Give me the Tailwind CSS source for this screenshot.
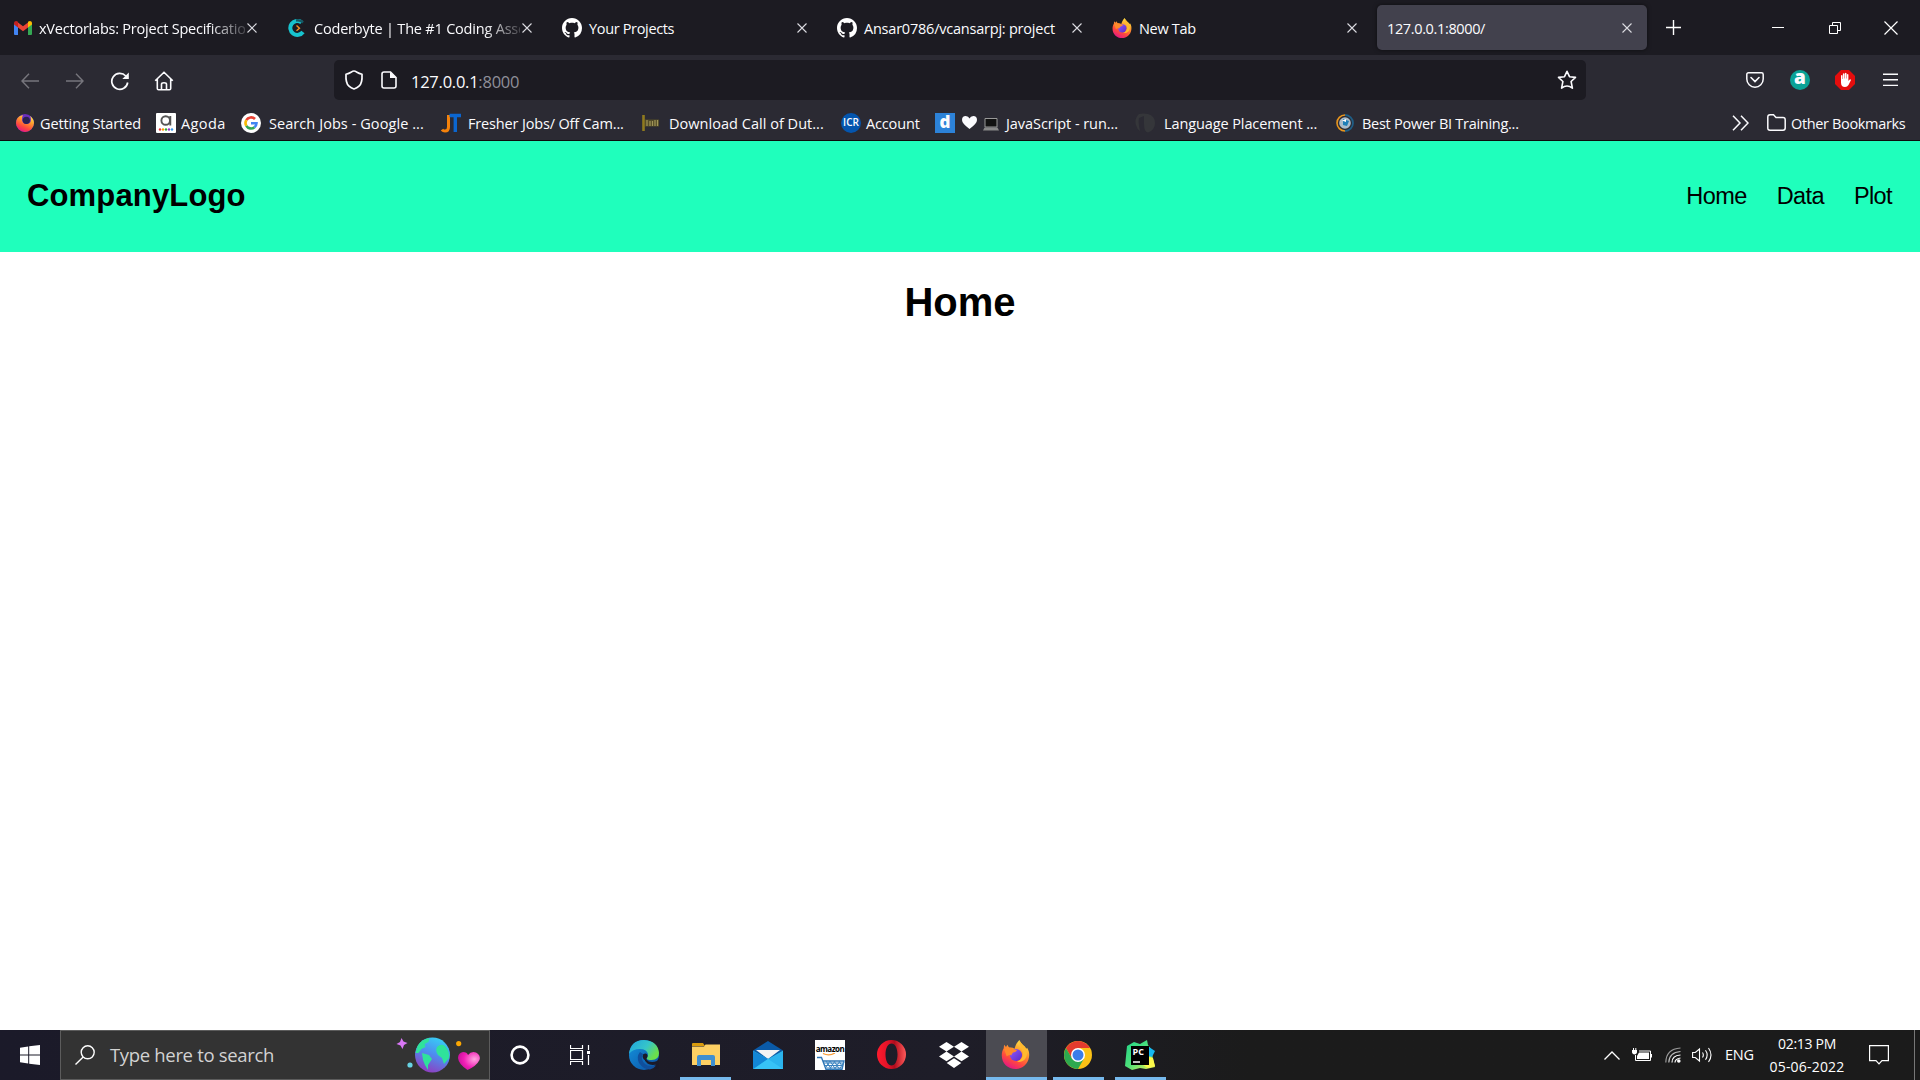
<!DOCTYPE html>
<html lang="en">
<head>
<meta charset="utf-8">
<title>127.0.0.1:8000/</title>
<script src="https://cdn.jsdelivr.net/npm/@tailwindcss/browser@4"></script>
</head>
<body class="w-[1920px] h-[1080px] overflow-hidden bg-white text-[14.5px] font-['Open_Sans','Noto_Sans',sans-serif] text-[#fbfbfe] flex flex-col">
<svg class="absolute w-0 h-0">
  <defs>
    <linearGradient id="fxo" x1="0.8" y1="0" x2="0.3" y2="1"><stop offset="0" stop-color="#fff44f"/><stop offset=".35" stop-color="#ffa02c"/><stop offset=".7" stop-color="#ff4a3d"/><stop offset="1" stop-color="#e31587"/></linearGradient>
    <linearGradient id="fxp" x1="0" y1="0" x2="1" y2="1"><stop offset="0" stop-color="#9059ff"/><stop offset="1" stop-color="#5b2bc4"/></linearGradient>
    <symbol id="x" viewBox="0 0 12 12"><path d="M1.500 1.500l9 9m0-9l-9 9" stroke="#dcdce2" stroke-width="1.100" fill="none"/></symbol>
    <symbol id="gh" viewBox="0 0 16 16"><path fill="#fff" d="M8 0C3.58 0 0 3.58 0 8c0 3.54 2.29 6.53 5.47 7.59.4.07.55-.17.55-.38 0-.19-.01-.82-.01-1.49-2.01.37-2.53-.49-2.69-.94-.09-.23-.48-.94-.82-1.13-.28-.15-.68-.52-.01-.53.63-.01 1.08.58 1.23.82.72 1.21 1.87.87 2.33.66.07-.52.28-.87.51-1.07-1.78-.2-3.64-.89-3.64-3.95 0-.87.31-1.59.82-2.15-.08-.2-.36-1.02.08-2.12 0 0 .67-.21 2.2.82.64-.18 1.32-.27 2-.27s1.36.09 2 .27c1.53-1.04 2.2-.82 2.2-.82.44 1.1.16 1.92.08 2.12.51.56.82 1.27.82 2.15 0 3.07-1.87 3.75-3.65 3.95.29.25.54.73.54 1.48 0 1.07-.01 1.93-.01 2.2 0 .21.15.46.55.38A8.01 8.01 0 0 0 16 8c0-4.42-3.58-8-8-8z"/></symbol>
    <symbol id="fx" viewBox="0 0 30 30"><path fill="url(#fxo)" d="M19 0c1 2 2 3.500 4 5.500 1.500 1 2.500 2 3 3.500l1-1c2 3 2.500 6 2 9.500C28 25 22 30 15 30 7 30 .8 24 .8 16c0-3 .7-5.500 2-7.500L3.200 5l2 2.200L6.500 5l2 3c2-.5 4 0 5.500 1 1-3.500 2.500-6.500 5-9z"/><circle cx="15.500" cy="15.500" r="6.300" fill="url(#fxp)"/><path fill="#ff8a2a" d="M3 9c3-2 7-1.500 10 .5l3.500.8c-.5 1.800-2 2.300-4 2.700-.8 1-1.500 1.500-1.700 3-2-1-3-.5-4.800 1z"/><path fill="#ffb92e" d="M19 1c0 5 3 7.500 3.500 12 .5 5-2 8-6 9.500 6 1 10.500-3 10.500-9 0-4-2-6-4-8z"/></symbol>
  </defs>
</svg>

<!-- tab strip -->
<header class="h-[55px] shrink-0 bg-[#1c1b22] flex items-center">
  <div class="w-[275px] pl-[14px] pr-[15px] flex items-center">
    <svg class="w-[18px] h-[14px] mr-[7px] shrink-0" viewBox="0 0 18 14"><path fill="#4285f4" d="M0 2v11q0 1 1 1h3V5z"/><path fill="#34a853" d="M18 2v11q0 1-1 1h-3V5z"/><path fill="#ea4335" d="M4 1.500L9 5.300l5-3.800v5L9 10.300 4 6.500z"/><path fill="#c5221f" d="M0 2.200C0 .3 2.200-.6 3.600.6l.4.4v5.500L0 3.500z"/><path fill="#fbbc04" d="M18 2.200c0-1.900-2.200-2.800-3.600-1.600l-.4.4v5.500l4-3z"/></svg>
    <div class="w-[206px] mt-[2px] overflow-hidden whitespace-nowrap tracking-[-0.22px] [mask-image:linear-gradient(to_right,black_170px,transparent_214px)]">xVectorlabs: Project Specification</div>
    <svg class="size-[12px] ml-[1px] shrink-0"><use href="#x"/></svg>
  </div>
  <div class="w-[275px] pl-[13px] pr-[15px] flex items-center">
    <svg class="size-[18px] mr-[8px] shrink-0" viewBox="0 0 18 18"><path d="M13.500 3.300A7 7 0 1 0 15 13" fill="none" stroke="#17c3ce" stroke-width="4"/><path d="M8 1.500q4-1 7 2" stroke="#155a66" stroke-width="2.500" fill="none"/><path d="M8.500 6.500l3 2.700-3 2.600" fill="none" stroke="#f59123" stroke-width="1.400"/></svg>
    <div class="w-[206px] mt-[2px] overflow-hidden whitespace-nowrap tracking-[-0.2px] [mask-image:linear-gradient(to_right,black_170px,transparent_214px)]">Coderbyte | The #1 Coding Assessment</div>
    <svg class="size-[12px] ml-[1px] shrink-0"><use href="#x"/></svg>
  </div>
  <div class="w-[275px] pl-[12px] pr-[17px] flex items-center">
    <svg class="size-[20px] mr-[7px] shrink-0"><use href="#gh"/></svg>
    <span class="mt-[2px] tracking-[-0.34px] whitespace-nowrap">Your Projects</span>
    <svg class="size-[12px] ml-auto shrink-0"><use href="#x"/></svg>
  </div>
  <div class="w-[275px] pl-[12px] pr-[17px] flex items-center">
    <svg class="size-[20px] mr-[7px] shrink-0"><use href="#gh"/></svg>
    <span class="mt-[2px] tracking-[-0.22px] whitespace-nowrap">Ansar0786/vcansarpj: project</span>
    <svg class="size-[12px] ml-auto shrink-0"><use href="#x"/></svg>
  </div>
  <div class="w-[277px] pl-[12px] pr-[19px] flex items-center">
    <svg class="size-[20px] mr-[7px] shrink-0"><use href="#fx"/></svg>
    <span class="mt-[2px] tracking-[-0.3px] whitespace-nowrap">New Tab</span>
    <svg class="size-[12px] ml-auto shrink-0"><use href="#x"/></svg>
  </div>
  <div class="w-[270px] h-[45px] rounded-[5px] bg-[#42414d] shadow-[0_0_4px_#0008] pl-[10px] pr-[14px] flex items-center">
    <span class="mt-[2px] tracking-[-0.36px] whitespace-nowrap">127.0.0.1:8000/</span>
    <svg class="size-[12px] ml-auto shrink-0"><use href="#x"/></svg>
  </div>
  <svg class="size-[15px] ml-[19px]" viewBox="0 0 15 15"><path d="M7.500 0v15M0 7.500h15" stroke="#fff" stroke-width="1.400"/></svg>
  <svg class="w-[12px] h-[12px] ml-[91px]" viewBox="0 0 12 12"><path d="M0 5.500h12" stroke="#fff"/></svg>
  <svg class="size-[12px] ml-[45px]" viewBox="0 0 12 12"><path d="M.5 3.500h8v8h-8zM3.500 3V.5h8v8H9" fill="none" stroke="#fff"/></svg>
  <svg class="size-[14px] ml-[43px]" viewBox="0 0 14 14"><path d="M.5.5l13 13m0-13l-13 13" stroke="#fff" stroke-width="1.200"/></svg>
</header>

<!-- navigation bar -->
<div class="h-[50px] shrink-0 bg-[#2b2a33] flex items-center">
  <svg class="w-[18px] h-[16px] ml-[21px] mt-[2px] text-[#77767d]" viewBox="0 0 18 16"><path d="M8 .8L1 8l7 7.200M1 8h17" fill="none" stroke="currentColor" stroke-width="1.400"/></svg>
  <svg class="w-[18px] h-[16px] ml-[27px] mt-[2px] text-[#77767d]" viewBox="0 0 18 16"><path d="M10 .8L17 8l-7 7.200M17 8H0" fill="none" stroke="currentColor" stroke-width="1.400"/></svg>
  <svg class="size-[20px] ml-[26px] mt-[2px]" viewBox="0 0 20 20"><path d="M17.700 11.500A8 8 0 1 1 15.800 5" fill="none" stroke="#fbfbfe" stroke-width="1.700"/><path d="M18.800 1.500v6.500h-6.500z" fill="#fbfbfe"/></svg>
  <svg class="size-[20px] ml-[24px] mt-[2px]" viewBox="0 0 20 20"><path d="M1.200 9.800L10 1.200l8.800 8.600M3.300 8v9.500q0 1.300 1.300 1.300h10.800q1.300 0 1.300-1.300V8M7.500 18.500v-5.200q0-1.500 2.500-1.500t2.500 1.500v5.200" fill="none" stroke="#fbfbfe" stroke-width="1.600" stroke-linejoin="round"/></svg>
  <div class="w-[1252px] h-[40px] ml-[160px] rounded-[5px] bg-[#1c1b22] flex items-center text-[16.500px]">
    <svg class="w-[20px] h-[20px] ml-[10px]" viewBox="0 0 20 20"><path d="M10 1Q11 1 13 2.200t5 2q.5 9-3 12-2 2-5 2.800-3-.8-5-2.800-3.500-3-3-12 3-.8 5-2T10 1z" fill="none" stroke="#fbfbfe" stroke-width="1.700" stroke-linejoin="round"/></svg>
    <svg class="w-[16px] h-[18px] ml-[17px]" viewBox="0 0 16 18"><path d="M9.500 1H3Q1 1 1 3v12q0 2 2 2h10q2 0 2-2V6.500z" fill="none" stroke="#fbfbfe" stroke-width="1.600"/><path d="M9 .8V7h6.500z" fill="#fbfbfe"/></svg>
    <span class="ml-[14px] mt-[4px] tracking-[-0.25px] whitespace-nowrap">127.0.0.1<span class="text-[#8f8f99]">:8000</span></span>
    <svg class="size-[20px] ml-auto mr-[9px]" viewBox="0 0 20 20"><path d="M10 1.300l2.500 5.400 6 .7-4.400 4.100 1.300 6.600Q10 14 4.600 18.100l1.300-6.600L1.500 7.400l6-.7z" fill="none" stroke="#fbfbfe" stroke-width="1.600" stroke-linejoin="round"/></svg>
  </div>
  <svg class="w-[18px] h-[16px] ml-[160px]" viewBox="0 0 18 16"><path d="M2.500.8h13q1.700 0 1.700 1.700V7a8.200 8.200 0 0 1-16.400 0V2.500Q.8.800 2.500.8z" fill="none" stroke="#fbfbfe" stroke-width="1.500"/><path d="M5 5.500l4 4 4-4" fill="none" stroke="#fbfbfe" stroke-width="1.600" stroke-linecap="round"/></svg>
  <span class="size-[20px] ml-[26px] rounded-full bg-[#0aa296] flex items-center justify-center text-[19px] leading-none font-extrabold pb-[5px]">a</span>
  <svg class="size-[20px] ml-[25px]" viewBox="0 0 20 20"><path fill="#e40d0d" d="M6 0h8l6 6v8l-6 6H6l-6-6V6z"/><path fill="#fff" d="M6 5.500q.9-.9 1.500 0V9h.4V3.800q.8-1 1.600 0V8.500h.4V3.300q.8-1 1.600 0v5.300h.4V4.500q.8-.8 1.500 0v6.500l1-1.300q1-.8 1.600.2L13.500 15q-1.200 2-3.500 2-4 0-4-4.500z"/></svg>
  <svg class="w-[15px] h-[14px] ml-[28px]" viewBox="0 0 15 14"><path d="M0 1.200h15M0 6.800h15M0 12.400h15" stroke="#fbfbfe" stroke-width="1.400"/></svg>
</div>

<!-- bookmarks toolbar -->
<div class="h-[36px] shrink-0 bg-[#2b2a33] border-b border-[#0c0c0d] flex items-center pl-[16px] whitespace-nowrap">
  <div class="w-[140px] flex items-center gap-[6px]">
    <svg class="size-[18px]" viewBox="0 0 18 18"><circle cx="9" cy="9" r="9" fill="#6b2fc0"/><path fill="url(#fxo)" d="M1.500 4Q4 1 7 1.200 5.500 3 6 6q.5 4 5 4 4-.3 4-4.500 0-2-1-3.500 4 3 4 7a9 9 0 0 1-18 0q0-3 1.500-5z"/><circle cx="10.300" cy="6.300" r="3.600" fill="#2a2250"/></svg>
    <span class="mt-[2px] tracking-[-0.1px]">Getting Started</span>
  </div>
  <div class="w-[85px] flex items-center gap-[5px]">
    <svg class="size-[20px]" viewBox="0 0 20 20"><rect width="20" height="20" rx="1" fill="#fff"/><circle cx="9.700" cy="7.500" r="4.300" fill="none" stroke="#555" stroke-width="1.900"/><path d="M14.300 3v9.500" stroke="#555" stroke-width="1.900"/><g><circle cx="4" cy="16.500" r="1.200" fill="#e33"/><circle cx="7" cy="16.500" r="1.200" fill="#f90"/><circle cx="10" cy="16.500" r="1.200" fill="#3a3"/><circle cx="13" cy="16.500" r="1.200" fill="#93c"/><circle cx="16" cy="16.500" r="1.200" fill="#39e"/></g></svg>
    <span class="mt-[2px] tracking-[0.4px]">Agoda</span>
  </div>
  <div class="w-[200px] flex items-center gap-[8px]">
    <svg class="size-[20px]" viewBox="0 0 20 20"><circle cx="10" cy="10" r="10" fill="#fff"/><g fill="none" stroke-width="2.600"><path d="M14 6A5.500 5.500 0 0 0 5.300 7.200" stroke="#ea4335"/><path d="M5.300 7.200a5.500 5.500 0 0 0 0 5.600" stroke="#fbbc04"/><path d="M5.300 12.800a5.500 5.500 0 0 0 8.200 1.400" stroke="#34a853"/><path d="M13.500 14.200a5.500 5.500 0 0 0 2-4H10" stroke="#4285f4"/></g></svg>
    <span class="mt-[2px] tracking-[0.07px]">Search Jobs - Google ...</span>
  </div>
  <div class="w-[201px] flex items-center gap-[7px]">
    <svg class="w-[20px] h-[20px]" viewBox="0 0 20 20"><path d="M7.500 2v12q0 4-3.500 4-2 0-3-1.500" fill="none" stroke="#f5820b" stroke-width="3"/><path d="M8.500 2.500H20M14.300 2v17" stroke="#0b66d0" stroke-width="3.400"/></svg>
    <span class="mt-[2px] tracking-[-0.16px]">Fresher Jobs/ Off Cam...</span>
  </div>
  <div class="w-[199px] flex items-center gap-[9px]">
    <svg class="w-[18px] h-[18px]" viewBox="0 0 18 18"><path d="M1.500 1v16" stroke="#8f7a1e" stroke-width="2.600"/><path d="M3 5.500h14v7H3z" fill="#544c28"/><path d="M5 6v6M8 7v5M10.500 7v5M13 6v6M15.500 6v6" stroke="#a19558" stroke-width="1.200"/></svg>
    <span class="mt-[2px] tracking-[0.03px]">Download Call of Dut...</span>
  </div>
  <div class="w-[94px] flex items-center gap-[5px]">
    <span class="size-[20px] rounded-full bg-[#0455ae] flex items-center justify-center text-[10px] font-semibold">ICR</span>
    <span class="mt-[2px] tracking-[-0.15px]">Account</span>
  </div>
  <div class="w-[200px] flex items-center">
    <span class="size-[20px] bg-[#2c82d8] flex items-center justify-center text-[17px] leading-none font-extrabold pb-[2px]">d</span>
    <svg class="w-[15px] h-[13px] ml-[7px]" viewBox="0 0 15 13"><path fill="#fbfbfe" d="M7.500 13Q0 7.500 0 4 0 0 3.700 0 6.500 0 7.500 2.500 8.500 0 11.300 0 15 0 15 4q0 3.500-7.500 9z"/></svg>
    <svg class="w-[16px] h-[13px] mt-[3px] ml-[6px] mr-[7px]" viewBox="0 0 16 13"><path d="M2 .5h12v8.500H2z" fill="#111" stroke="#999"/><path d="M1.500 9.500h13l1.500 3H0z" fill="#888"/></svg>
    <span class="mt-[2px] tracking-[-0.06px]">JavaScript - run...</span>
  </div>
  <div class="w-[201px] flex items-center gap-[9px]">
    <svg class="size-[20px]" viewBox="0 0 20 20"><path d="M4 1Q-1 6 1 12q1 4 4 6-2-7-1-13l5-2v8q0 8 4 8.500Q20 17 20 10T13 1Q8 0 4 1z" fill="#35363a"/></svg>
    <span class="mt-[2px] tracking-[-0.1px]">Language Placement ...</span>
  </div>
  <div class="w-[300px] flex items-center gap-[8px]">
    <svg class="size-[18px]" viewBox="0 0 18 18"><path d="M9 1a8 8 0 0 0 0 16" fill="none" stroke="#e8961f" stroke-width="1.600"/><path d="M9 1a8 8 0 0 1 0 16" fill="none" stroke="#1f5e86" stroke-width="1.800"/><circle cx="9" cy="9" r="5.800" fill="#a9bccb"/><path d="M7 5l6 2-2 5-4-1z" fill="#1e7fb8"/><path d="M6 6.500l4-1.500v3z" fill="#fff"/></svg>
    <span class="mt-[2px] tracking-[-0.27px]">Best Power BI Training...</span>
  </div>
  <svg class="w-[17px] h-[16px] ml-[96px]" viewBox="0 0 17 16"><path d="M1 .8L8 8l-7 7.200M9 .8L16 8l-7 7.200" fill="none" stroke="#fbfbfe" stroke-width="1.500"/></svg>
  <svg class="w-[19px] h-[17px] ml-[18px] mr-[5px]" viewBox="0 0 19 17"><path d="M.8 3Q.8.800 3 .8h3.500l2.500 2.700h7q2.200 0 2.200 2.200v8.300q0 2.200-2.200 2.200H3q-2.200 0-2.200-2.200z" fill="none" stroke="#fbfbfe" stroke-width="1.500"/></svg>
  <span class="mt-[2px] tracking-[-0.35px]">Other Bookmarks</span>
</div>

<!-- web page -->
<main class="flex-1 bg-white text-black font-['Liberation_Sans',Arial,sans-serif]">
  <nav class="h-[111px] bg-[#1fffbc] pl-[27px] pr-[28px] flex items-center justify-between">
    <span class="text-[31px] font-bold tracking-[0.150px]">CompanyLogo</span>
    <div class="flex gap-[30px] text-[23.500px] tracking-[-0.600px]">
      <a>Home</a><a>Data</a><a>Plot</a>
    </div>
  </nav>
  <h1 class="mt-[27px] text-center text-[40px] leading-[46px] font-bold">Home</h1>
</main>

<!-- taskbar -->
<footer class="h-[50px] shrink-0 bg-linear-to-r from-[#1b1a29] via-[#1e1d28] via-50% to-[#1b1b1b] to-65% flex items-center">
  <div class="w-[60px] flex justify-center"><svg class="size-[20px]" viewBox="0 0 20 20"><path fill="#fff" d="M0 2.700l8.200-1.200v8H0zM9.200 1.300L20 0v9.500H9.200zM0 10.500h8.200v8L0 17.300zM9.200 10.500H20V20L9.200 18.700z"/></svg></div>
  <div class="w-[430px] h-[50px] bg-[#333] border border-[#5c5c5c] flex items-center pl-[14px]">
    <svg class="size-[20px]" viewBox="0 0 20 20"><circle cx="12.700" cy="7.300" r="6.500" fill="none" stroke="#fff" stroke-width="1.400"/><path d="M8.200 12L.5 19.500" stroke="#fff" stroke-width="1.400"/></svg>
    <span class="ml-[15px] w-[286px] text-[18.500px] text-[#d2d2d2] tracking-[-0.33px] whitespace-nowrap">Type here to search</span>
    <svg class="w-[85px] h-[36px]" viewBox="396 1037 85 36">
      <defs><linearGradient id="gl" x1=".8" y1="0" x2=".4" y2="1"><stop offset="0" stop-color="#35d5f5"/><stop offset=".5" stop-color="#4d8df0"/><stop offset="1" stop-color="#8e3fc0"/></linearGradient><radialGradient id="ht" cx=".75" cy=".4" r=".8"><stop offset="0" stop-color="#ffa6e0"/><stop offset=".6" stop-color="#f21fb6"/><stop offset="1" stop-color="#c3109a"/></radialGradient></defs>
      <path fill="#d977f5" d="M401.500 1038l2 3.500 4 1.500-3.500 2-1.500 4-2-3.500-4-1.500 3.500-2z"/>
      <circle cx="410" cy="1065" r="2.600" fill="#67d3e3"/><circle cx="458.700" cy="1043.600" r="2.600" fill="#fba703"/>
      <circle cx="432.500" cy="1055" r="17.500" fill="url(#gl)"/>
      <path fill="#2fe39b" d="M417.500 1046q4-7 12-8l-1 4-4 2 1 3-4 2-3 4-3 0zM422 1053l7 2 3 4-4 6 0 5-3-5-2-5zM437 1047q4-4 8-1 5 6 4 12l-5 6-2-6-4-3q-3-4-1-8z"/>
      <path fill="url(#ht)" d="M467.500 1070q-9-6-9.500-12 0-5 5-6 4 0 5 3 3-4 8-2.500 5 2.500 3.500 7.500-3 6-12 10z"/>
    </svg>
  </div>
  <div class="w-[60px] flex justify-center"><svg class="size-[20px]" viewBox="0 0 20 20"><circle cx="10" cy="10" r="8.400" fill="none" stroke="#fff" stroke-width="2.600"/></svg></div>
  <div class="w-[63px] pl-[20px]"><svg class="size-[20px]" viewBox="0 0 20 20"><path d="M.5 0v3.500h12V0M.5 20v-3.500h12V20M.5 5.500h12v9H.5zM18.500 0v5M18.500 10v10" fill="none" stroke="#fff" stroke-width="1.200"/><path d="M17 6h3v3h-3z" fill="#fff"/></svg></div>
  <div class="w-[62px] flex justify-center"><svg class="size-[30px]" viewBox="0 0 30 30">
    <defs><linearGradient id="e1" x1="0" y1="0" x2="1" y2=".5"><stop offset="0" stop-color="#1ea4e0"/><stop offset=".6" stop-color="#36c5c9"/><stop offset="1" stop-color="#6be04a"/></linearGradient><linearGradient id="e2" x1="0" y1="0" x2="1" y2="1"><stop offset="0" stop-color="#1494df"/><stop offset="1" stop-color="#0b4fa0"/></linearGradient></defs>
    <circle cx="15" cy="15" r="15" fill="url(#e2)"/><path fill="#1b1a29" d="M17 20q5 3.500 11 1l2-3v10l-6 2q4-3 4.500-6-6 2-10-.5-3-2-3-5z"/><path fill="url(#e1)" d="M0 14Q1.500 0 15 0q14 1 15 13 0 7-7.500 7-5 0-5-2 2-2 1.500-4-1.500-5-8-5Q3.500 9 0 14z"/><path fill="#104f9c" d="M11 12q-4 5-1 11 4 6 11 6.500 4-1 6-4-7 2-11-1.500-5-5-2-10z"/><path fill="#1b1a29" d="M14 14.500q3-2 4.500.5.5 2-1 3.500 0 2 3 2.500-4 .5-6-2-1.500-2-.5-4.500z"/>
  </svg></div>
  <div class="w-[62px] h-full relative flex items-center justify-center"><svg class="w-[28px] h-[24px] -mt-[2px]" viewBox="0 0 28 24"><path fill="#d99b0c" d="M0 2Q0 1 1 1h10l2 3H0z"/><path fill="#fdd063" d="M0 4.500h12l1.500-2H28V23H0z"/><path fill="#3f8fd0" d="M5 15q0-2 2-2h14q2 0 2 2v9h-4v-6H9v6H5z"/></svg><i class="absolute bottom-0 left-[5px] w-[51px] h-[3px] bg-[#76b9ed]"></i></div>
  <div class="w-[62px] flex justify-center"><svg class="w-[30px] h-[28px]" viewBox="0 0 30 28"><path fill="#0a5aa8" d="M0 9.500L15 0l15 9.500-15 9z"/><path fill="#f3f3f3" d="M3 9h24L15 18z"/><path fill="#2bb4ee" d="M0 9.500L15 18l15-8.500V28H0z"/><path fill="#1387d6" d="M0 10v18l15-10z"/><path fill="#37c3f6" d="M15 18L30 28H1z"/></svg></div>
  <div class="w-[62px] flex justify-center"><div class="size-[30px] bg-white flex flex-col items-center overflow-hidden"><span class="text-[8px] leading-[9px] mt-[4px] font-bold text-black tracking-[-0.500px]">amazon</span><svg class="w-[30px] h-[17px]" viewBox="0 0 30 17"><path d="M8 .5q6 3 12-.5" fill="none" stroke="#f79b34" stroke-width="1.300"/><path d="M2 4.500h4.500L11 16.500M8 8h21l-2 8.500H11z" fill="none" stroke="#2f76b5" stroke-width="1.300"/><path d="M9 10h20M10 12.500h18M11 15h17M11 8l6 9M15 8l6 9M19 8l6 9M24 8l3 5M15 8l-4 6M20 8l-6 9M25 8l-6 9M29 9l-5 8" stroke="#3b83c0" stroke-width="1"/></svg></div></div>
  <div class="w-[62px] flex justify-center"><svg class="size-[29px] -mt-px -ml-px" viewBox="0 0 29 29"><defs><linearGradient id="op"><stop offset="0" stop-color="#ff1b2d"/><stop offset=".4" stop-color="#e01228"/><stop offset=".6" stop-color="#b00c1c"/><stop offset="1" stop-color="#ff5a5a"/></linearGradient></defs><path fill="url(#op)" fill-rule="evenodd" d="M14.500 0a14.500 14.500 0 1 1 0 29 14.500 14.500 0 0 1 0-29zm0 3.500C11 3.500 8.500 8 8.500 14.500S11 25.500 14.500 25.500s6-4.500 6-11-2.500-11-6-11z"/></svg></div>
  <div class="w-[63px] pr-[2px] flex justify-center"><svg class="w-[30px] h-[26px]" viewBox="0 0 30 26"><path fill="#fff" d="M7.500 0L15 4.800 7.500 9.600 0 4.800zM22.500 0L30 4.800l-7.500 4.800L15 4.800zM7.500 9.600l7.500 4.800-7.500 4.800L0 14.400zM22.500 9.600l7.500 4.800-7.500 4.800-7.500-4.800zM15 16.200l7.300 4.800L15 26l-7.300-5z"/></svg></div>
  <div class="w-[61px] h-full bg-[#4b4b52] border-b-[3px] border-[#76b9ed] pt-[2px] flex items-center justify-center"><svg class="size-[29px] -ml-[2px]"><use href="#fx"/></svg></div>
  <div class="w-[62px] h-full relative flex items-center justify-center"><svg class="size-[28px]" viewBox="0 0 28 28"><circle cx="14" cy="14" r="14" fill="#fbc116"/><path fill="#e33b2e" d="M1.900 7A14 14 0 0 1 26.100 7H14L8 17.500z"/><path fill="#2da94f" d="M1.900 7A14 14 0 0 0 14 28l6-10.500H8z"/><circle cx="14" cy="14" r="7" fill="#fff"/><circle cx="14" cy="14" r="5.500" fill="#3b7de9"/></svg><i class="absolute bottom-0 left-[6px] w-[51px] h-[3px] bg-[#76b9ed]"></i></div>
  <div class="w-[62px] h-full relative flex items-center justify-center"><svg class="size-[30px]" viewBox="0 0 30 30"><defs><linearGradient id="pc" x1="0" y1="0" x2="1" y2="1"><stop offset="0" stop-color="#21d789"/><stop offset=".5" stop-color="#4ee07a"/><stop offset="1" stop-color="#fcf84a"/></linearGradient></defs><path fill="url(#pc)" d="M2 6l7-4 6 2 7-4 1 5 3 4 2 10 2 8-9 2-6-1-8 2-7-4z"/><path fill="#15b8f0" d="M24 7l6 4-3 6-3-1z"/><path fill="#fcf84a" d="M24 17l4 1 2 8-7 2-5-3z"/><path fill="#000" d="M6 6h18v19H6z"/><path d="M8 22h7" stroke="#fff" stroke-width="1.500"/><text x="7.500" y="14.500" font-size="9" font-weight="bold" fill="#fff">PC</text></svg><i class="absolute bottom-0 left-[6px] w-[51px] h-[3px] bg-[#76b9ed]"></i></div>
  <div class="ml-auto flex items-center h-full w-[316px]">
    <svg class="w-[16px] h-[9px]" viewBox="0 0 16 9"><path d="M.5 8.500L8 1l7.500 7.500" fill="none" stroke="#fff" stroke-width="1.300"/></svg>
    <svg class="w-[20px] h-[14px] ml-[12px]" viewBox="0 0 20 14"><path d="M7 3h11.500v9.500H3.500V7" fill="none" stroke="#fff"/><path fill="#fff" d="M7 4.500h10v6.500H5V8zM19 6h1v3.500h-1zM0 2h5v2.500q-.5 2-2.500 2T0 4.500zM1 0h1v2H1zM3.300 0h1v2h-1z"/></svg>
    <svg class="w-[16px] h-[16px] ml-[13px]" viewBox="0 0 16 16"><g fill="none" stroke="#fff" stroke-width="1.200"><path d="M10 15.500q0-3.500 5.500-4.500" /><path d="M7 15.500Q7 8.500 15.500 8"/><path d="M3.800 15.500Q4 5.500 15.500 4.500" stroke="#bbb"/><path d="M.8 15.500Q1 2 15.500 1" stroke="#999"/></g><circle cx="13.800" cy="14" r="1.800" fill="#fff"/></svg>
    <svg class="w-[21px] h-[16px] ml-[11px]" viewBox="0 0 21 16"><path d="M.6 5.500h2.700L7.500 2v12l-4.200-3.500H.6zM10.500 5.500q1.700 2.500 0 5M13.500 3.300q3.300 4.700 0 9.400M16.500 1q5 7 0 14" fill="none" stroke="#fff" stroke-width="1.100"/></svg>
    <span class="ml-[12px] w-[43px] text-[14.500px] text-white tracking-[-0.2px]">ENG</span>
    <div class="w-[78px] flex flex-col items-center text-[14px] leading-[23px] text-white whitespace-nowrap"><span class="tracking-[-0.3px]">02:13 PM</span><span class="tracking-[0.200px]">05-06-2022</span></div>
    <svg class="w-[20px] h-[20px] ml-[23px]" viewBox="0 0 20 20"><path d="M.6.6h18.800v15H13l-3 3.200-3-3.200H.6z" fill="none" stroke="#fff" stroke-width="1.200"/></svg>
    <i class="w-px h-full bg-[#777] ml-[25px]"></i>
  </div>
</footer>
</body>
</html>
